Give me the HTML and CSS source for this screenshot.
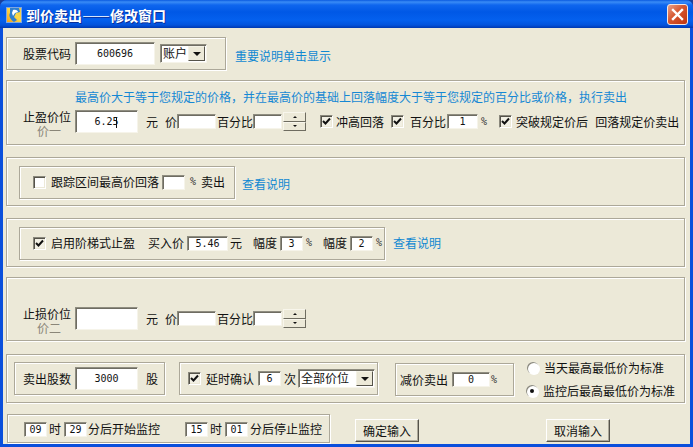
FILE: index.html
```html
<!DOCTYPE html>
<html lang="zh-CN">
<head>
<meta charset="utf-8">
<title>到价卖出——修改窗口</title>
<link rel="stylesheet" href="styles.css">
</head>
<body>
<div class="window">
  <header class="titlebar">
    <svg class="appicon" width="16" height="16" viewBox="0 0 16 16">
      <defs><linearGradient id="g" x1="0" y1="1" x2="1" y2="0"><stop offset="0" stop-color="#f59a10"/><stop offset=".55" stop-color="#fbd94a"/><stop offset="1" stop-color="#e9c84a"/></linearGradient></defs>
      <rect width="16" height="16" fill="url(#g)"/>
      <path d="M4 1h9l1 4-4 1-2 4 3 3-3 2C5 13 2 9 4 6z" fill="#2f7fd0"/>
      <path d="M7 3c3-1 5 1 5 2L9 6 7 9 6 6z" fill="#fff"/>
      <rect x=".5" y=".5" width="15" height="15" fill="none" stroke="#7fa6e0"/>
    </svg>
    <span class="title">到价卖出——修改窗口</span>
    <span class="close">
      <svg width="13" height="13" viewBox="0 0 13 13"><path d="M2 2l9 9M11 2l-9 9" stroke="#fff" stroke-width="2.4" stroke-linecap="square"/></svg>
    </span>
  </header>

  <main class="client">
    <div class="row top">
      <section class="panel p-code">
        <span>股票代码</span>
        <span class="field w80 h23 ml4">600696</span>
        <span class="combo w47 ml5"><span class="combo-text">账户</span><span class="drop"><i></i></span></span>
      </section>
      <a class="link ml9 nudge">重要说明单击显示</a>
    </div>

    <section class="panel p-rise">
      <p class="note">最高价大于等于您规定的价格，并在最高价的基础上回落幅度大于等于您规定的百分比或价格，执行卖出</p>
      <div class="row">
        <div class="stack"><span>止盈价位</span><span class="sub">价一</span></div>
        <span class="field w63 h23 ml4">6.2<span class="caret">5</span></span>
        <span class="ml8">元</span><span class="ml7">价</span>
        <span class="field w39 h15"></span>
        <span class="ml1">百分比</span>
        <span class="field w29 h15"></span>
        <span class="spin ml1"><span class="up"><i></i></span><span class="down"><i></i></span></span>
        <span class="check on ml14"><svg width="9" height="9" viewBox="0 0 9 9"><path d="M1 4l2.5 2.5L8 1.500" fill="none" stroke="#111" stroke-width="2"/></svg></span>
        <span class="ml3">冲高回落</span>
        <span class="check on ml7"><svg width="9" height="9" viewBox="0 0 9 9"><path d="M1 4l2.5 2.5L8 1.500" fill="none" stroke="#111" stroke-width="2"/></svg></span>
        <span class="ml6">百分比</span>
        <span class="field w31 h15 ml1">1</span>
        <span class="pct ml3">%</span>
        <span class="check on ml12"><svg width="9" height="9" viewBox="0 0 9 9"><path d="M1 4l2.5 2.5L8 1.500" fill="none" stroke="#111" stroke-width="2"/></svg></span>
        <span class="ml4">突破规定价后</span>
        <span class="ml7">回落规定价卖出</span>
      </div>
    </section>

    <section class="panel p-track">
      <div class="panel inner i-track">
        <span class="check"></span>
        <span class="ml5">跟踪区间最高价回落</span>
        <span class="field w23 h15 ml3"></span>
        <span class="pct ml5">%</span>
        <span class="ml5">卖出</span>
      </div>
      <a class="link ml7 nudge">查看说明</a>
    </section>

    <section class="panel p-step">
      <div class="panel inner i-step">
        <span class="check on"><svg width="9" height="9" viewBox="0 0 9 9"><path d="M1 4l2.5 2.5L8 1.500" fill="none" stroke="#111" stroke-width="2"/></svg></span>
        <span class="ml5">启用阶梯式止盈</span>
        <span class="ml13">买入价</span>
        <span class="field w41 h15 ml3">5.46</span>
        <span class="ml2">元</span>
        <span class="ml11">幅度</span>
        <span class="field w23 h15 ml3">3</span>
        <span class="pct ml3">%</span>
        <span class="ml11">幅度</span>
        <span class="field w23 h15 ml3">2</span>
        <span class="pct ml3">%</span>
      </div>
      <a class="link ml8">查看说明</a>
    </section>

    <section class="panel p-loss">
      <div class="row">
        <div class="stack"><span>止损价位</span><span class="sub">价二</span></div>
        <span class="field w63 h23 ml4"></span>
        <span class="ml8">元</span><span class="ml7">价</span>
        <span class="field w39 h15"></span>
        <span class="ml1">百分比</span>
        <span class="field w29 h15"></span>
        <span class="spin ml1"><span class="up"><i></i></span><span class="down"><i></i></span></span>
      </div>
    </section>

    <section class="panel p-sell">
      <div class="panel inner i-shares">
        <span>卖出股数</span>
        <span class="field w63 h23 ml4">3000</span>
        <span class="ml8">股</span>
      </div>
      <div class="panel inner i-delay ml14">
        <span class="check on"><svg width="9" height="9" viewBox="0 0 9 9"><path d="M1 4l2.5 2.5L8 1.500" fill="none" stroke="#111" stroke-width="2"/></svg></span>
        <span class="ml5">延时确认</span>
        <span class="field w23 h15 ml4">6</span>
        <span class="ml3">次</span>
        <span class="combo w77 ml2"><span class="combo-text">全部价位</span><span class="drop"><i></i></span></span>
      </div>
      <div class="panel inner i-cut ml17">
        <span>减价卖出</span>
        <span class="field w38 h15 ml4">0</span>
        <span class="pct ml1">%</span>
      </div>
      <div class="radios">
        <div class="row r1"><span class="radio"></span><span class="ml5">当天最高最低价为标准</span></div>
        <div class="row r2"><span class="radio on"></span><span class="ml5">监控后最高最低价为标准</span></div>
      </div>
    </section>

    <div class="row bottom">
      <section class="panel p-time">
        <span class="field w23 h15">09</span>
        <span class="ml2">时</span>
        <span class="field w23 h15 ml3">29</span>
        <span class="ml1">分后开始监控</span>
        <span class="field w23 h15 ml25">15</span>
        <span class="ml2">时</span>
        <span class="field w23 h15 ml3">01</span>
        <span class="ml2">分后停止监控</span>
      </section>
      <button class="btn ml25">确定输入</button>
      <button class="btn ml127">取消输入</button>
    </div>
  </main>
</div>
</body>
</html>
```
FILE: styles.css
```css
* { box-sizing: border-box; }
html, body { margin: 0; padding: 0; background: #1a3f9c; }
body { font: 12px/16px "Noto Sans CJK SC", "Liberation Sans", sans-serif; color: #111; white-space: nowrap; }
.window {
  width: 693px; height: 447px; overflow: hidden;
  display: flex; flex-direction: column;
  border-radius: 7px 7px 0 0;
  background: #0a4fdc;
}
.titlebar {
  height: 28px; flex: none; display: flex; align-items: center; padding: 1px 5px 0 6px;
  background: linear-gradient(#0a5ae0 0, #3a8cf6 2px, #0f66ee 5px, #0058e6 12px, #0460ee 20px, #0353dc 25px, #0038b0 28px);
}
.appicon { flex: none; }
.title { margin-left: 4px; color: #fff; font-size: 14px; font-weight: 700; text-shadow: 1px 1px 0 #0b2f9a; }
.close {
  margin-left: auto; margin-top: -1px; width: 21px; height: 21px; display: flex; align-items: center; justify-content: center;
  border: 1px solid #f4e8e2; border-radius: 3px;
  background: linear-gradient(135deg, #e8a088, #d5562f 45%, #bf3410);
}
.client {
  flex: 1; margin: 0 3px 3px; padding: 9px 5px 0 3px; background: #ece9d8;
  display: flex; flex-direction: column;
}
.row { display: flex; align-items: center; }
.row > span, .panel > span { flex: none; }
.panel {
  border: 1px solid #aca899; box-shadow: 1px 1px 0 #fff, inset 1px 1px 0 #fff;
  display: flex; align-items: center; flex: none;
}
.top { height: 33px; flex: none; }
.p-code { width: 220px; height: 33px; padding-left: 16px; }
.p-rise { display: block; height: 65px; margin-top: 10px; padding: 8px 0 0 16px; }
.note { margin: 0 0 5px 52px; color: #1688d4; }
.p-track { height: 49px; margin-top: 12px; padding-left: 12px; padding-top: 1px; }
.p-step { height: 49px; margin-top: 12px; padding-left: 12px; padding-top: 1px; }
.p-loss { display: block; height: 64px; margin-top: 10px; padding: 29px 0 0 16px; }
.p-sell { height: 49px; margin-top: 13px; padding-left: 7px; }
.inner { height: 33px; padding-left: 13px; }
.i-track { width: 216px; }
.i-step { width: 366px; }
.i-shares { width: 151px; padding-left: 8px; }
.i-delay { width: 199px; padding-left: 8px; }
.i-cut { width: 119px; padding-left: 4px; margin-top: 2px; }
.bottom { flex: none; margin-top: 11px; align-items: flex-start; }
.p-time { width: 323px; height: 29px; margin-left: 1px; padding: 1px 0 0 16px; }

.radios { width: 160px; height: 47px; margin-left: 12px; display: flex; flex-direction: column; }
.r1 { margin-top: 5px; margin-left: 1px; }
.r2 { margin-top: 7px; }

.field {
  display: inline-flex; align-items: center; justify-content: center; flex: none;
  padding-top: 1px;
  background: #fff; color: #111;
  border: 1px solid; border-color: #8f8d80 #f6f4ea #f6f4ea #8f8d80;
  box-shadow: inset 1px 1px 0 #6e6c62;
  font: 10px/12px "DejaVu Sans Mono", "Liberation Mono", monospace;
}
.h23 { height: 23px; } .h15 { height: 15px; }
.w23 { width: 23px; } .w29 { width: 29px; } .w31 { width: 31px; } .w38 { width: 38px; }
.w39 { width: 39px; } .w41 { width: 41px; } .w47 { width: 47px; } .w63 { width: 63px; }
.w77 { width: 77px; } .w80 { width: 80px; }
.ml1 { margin-left: 1px; } .ml2 { margin-left: 2px; } .ml3 { margin-left: 3px; } .ml4 { margin-left: 4px; }
.ml5 { margin-left: 5px; } .ml6 { margin-left: 6px; } .ml7 { margin-left: 7px; } .ml8 { margin-left: 8px; }
.ml9 { margin-left: 9px; } .ml11 { margin-left: 11px; } .ml12 { margin-left: 12px; } .ml13 { margin-left: 13px; } .ml14 { margin-left: 14px; }
.ml17 { margin-left: 17px; } .ml25 { margin-left: 25px; } .ml127 { margin-left: 127px; }

.caret { position: relative; }
.caret::before { content: ""; position: absolute; left: 3px; top: 1px; height: 11px; border-left: 1px solid #111; }

.stack { width: 48px; height: 23px; line-height: 14px; flex: none; display: flex; flex-direction: column; }
.stack span { flex: none; }
.sub { margin-left: 14px; color: #8a8678; }
.pct { font: 10px/12px "DejaVu Sans Mono", "Liberation Mono", monospace; color: #333; }
.link { color: #1088d2; flex: none; }
.nudge { margin-top: 4px; }

.combo {
  display: flex; height: 19px; flex: none; background: #fff;
  border: 1px solid; border-color: #8f8d80 #f6f4ea #f6f4ea #8f8d80;
  box-shadow: inset 1px 1px 0 #6e6c62;
  padding: 1px 1px 1px 2px;
}
.combo-text { flex: 1; line-height: 14px; }
.drop {
  width: 17px; flex: none; display: flex; align-items: center; justify-content: center;
  background: #ece9d8; border: 1px solid; border-color: #f4f2e6 #55534a #55534a #f4f2e6;
}
.drop i { border: 4px solid transparent; border-top: 4px solid #111; border-bottom: 0; }

.spin { width: 23px; height: 19px; flex: none; display: flex; flex-direction: column; }
.spin span {
  flex: 1; display: flex; align-items: center; justify-content: center; background: #ece9d8;
  border: 1px solid; border-color: #f8f6ec #6e6c60 #6e6c60 #f8f6ec;
}
.up i { border: 2px solid transparent; border-bottom: 2px solid #111; border-top: 0; }
.down i { border: 2px solid transparent; border-top: 2px solid #111; border-bottom: 0; }

.check {
  width: 13px; height: 13px; flex: none; display: inline-flex; align-items: center; justify-content: center;
  background: #fff; border: 1px solid; border-color: #8a887c #fff #fff #8a887c;
  box-shadow: inset 1px 1px 0 #55534a, inset -1px -1px 0 #ece9d8;
}
.check.on { background: #f2f0e4; }
.radio {
  width: 12px; height: 12px; flex: none; border-radius: 50%; position: relative; background: #fff;
  box-shadow: inset 1px 1px 0 #8a887c, 1px 1px 0 #fff;
}
.radio.on::after { content: ""; position: absolute; left: 4px; top: 4px; width: 4px; height: 4px; border-radius: 50%; background: #111; }

.btn {
  width: 64px; height: 23px; margin-top: 5px; padding: 0; flex: none;
  background: #ece9d8; color: #111; font: inherit;
  border: 1px solid; border-color: #fff #55534a #55534a #fff;
  box-shadow: inset -1px -1px 0 #aca899;
}
```
